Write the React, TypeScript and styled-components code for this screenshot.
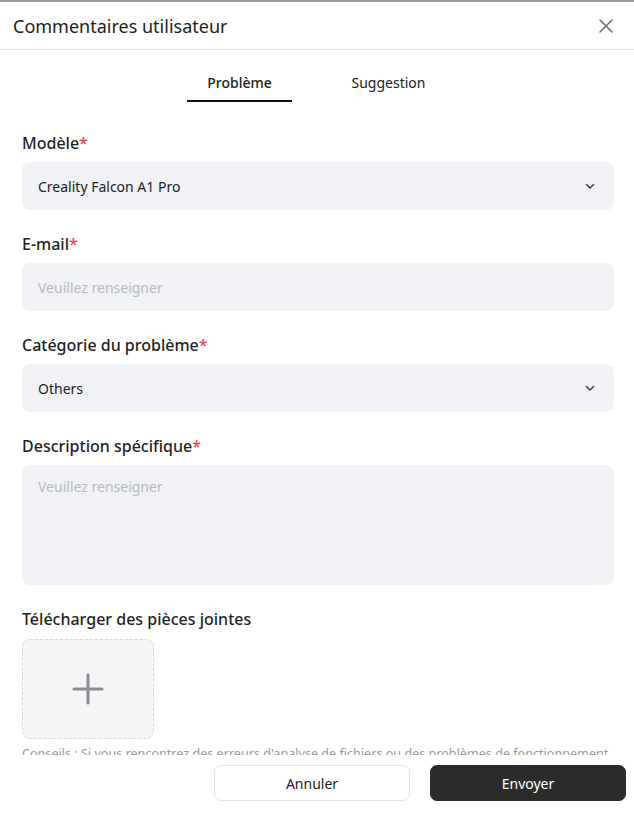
import React, { useState } from "react";
import styled, { createGlobalStyle } from "styled-components";

const GlobalStyle = createGlobalStyle`
  html, body {
    margin: 0;
    padding: 0;
    background: #ffffff;
  }
  body {
    font-family: "Noto Sans", "Liberation Sans", sans-serif;
    color: #1f1f1f;
  }
  * {
    box-sizing: border-box;
  }
`

const Dialog = styled.div`
  width: 634px;
  height: 825px;
  border-top: 2px solid #9b9b9b;
  display: flex;
  flex-direction: column;
  background: #fff;
`

const Header = styled.div`
  height: 48px;
  flex-shrink: 0;
  display: flex;
  align-items: center;
  justify-content: space-between;
  padding: 0 18px 0 13px;
  border-bottom: 1px solid #e4e4e6;
`

const Title = styled.h1`
  margin: 0;
  font-size: 18px;
  font-weight: 400;
  color: #222;
`

const CloseButton = styled.button`
  border: none;
  background: transparent;
  padding: 0;
  width: 20px;
  height: 20px;
  display: flex;
  align-items: center;
  justify-content: center;
  cursor: pointer;
`

const Body = styled.div`
  flex: 1;
  overflow: hidden;
  padding: 0 20px 0 22px;
`

const Tabs = styled.div`
  display: flex;
  justify-content: center;
  margin-top: 20px;
  padding-right: 8px;
`

const Tab = styled.button<{ $active: boolean }>`
  border: none;
  background: transparent;
  font-family: inherit;
  font-size: 14px;
  font-weight: ${p => (p.$active ? 500 : 400)};
  color: #222;
  width: 105px;
  height: 32px;
  padding: 0 0 5px;
  margin: 0 22px;
  border-bottom: 2px solid ${p => (p.$active ? "#111" : "transparent")};
  cursor: pointer;
`

const Field = styled.div<{ $first?: boolean }>`
  margin-top: ${p => (p.$first ? "30px" : "23px")};
`

const Label = styled.div`
  font-size: 16px;
  font-weight: 500;
  line-height: 22px;
  color: #1f1f1f;
  margin-bottom: 8px;
  span {
    color: #e5484d;
  }
`

const Box = styled.div<{ $tall?: boolean }>`
  height: ${p => (p.$tall ? "120px" : "48px")};
  background: #f1f2f5;
  border-radius: 8px;
  display: flex;
  align-items: ${p => (p.$tall ? "flex-start" : "center")};
  justify-content: space-between;
  padding: ${p => (p.$tall ? "12px 16px" : "0 18px 0 16px")};
  font-size: 14px;
  color: #222;
`

const Placeholder = styled.span`
  color: #b8bac0;
`

const Upload = styled.div`
  width: 132px;
  height: 100px;
  margin-top: 9px;
  border: 1px dashed #d6d8dc;
  border-radius: 8px;
  background: #f4f5f7;
  display: flex;
  align-items: center;
  justify-content: center;
`

const Hint = styled.div`
  margin-top: 6px;
  font-size: 12.6px;
  color: #9a9a9a;
  white-space: nowrap;
`

const Footer = styled.div`
  height: 70px;
  flex-shrink: 0;
  display: flex;
  justify-content: flex-end;
  align-items: flex-start;
  gap: 20px;
  padding: 10px 8px 0 0;
`

const Button = styled.button<{ $primary?: boolean }>`
  width: 196px;
  height: 36px;
  border-radius: 7px;
  font-family: inherit;
  font-size: 14px;
  cursor: pointer;
  border: 1px solid ${p => (p.$primary ? "#2b2b2b" : "#e2e3e6")};
  background: ${p => (p.$primary ? "#2b2b2b" : "#fff")};
  color: ${p => (p.$primary ? "#fff" : "#222")};
`

const Chevron = () => (
  <svg width="12" height="12" viewBox="0 0 12 12" fill="none">
    <path d="M2.5 4.5L6 8l3.5-3.5" stroke="#333" strokeWidth="1.4" strokeLinecap="round" strokeLinejoin="round" />
  </svg>
)

const CloseIcon = () => (
  <svg width="16" height="16" viewBox="0 0 16 16" fill="none">
    <path d="M2 2l12 12M14 2L2 14" stroke="#6b6b6b" strokeWidth="1.5" strokeLinecap="round" />
  </svg>
)

const PlusIcon = () => (
  <svg width="32" height="32" viewBox="0 0 32 32" fill="none">
    <path d="M16 2v28M2 16h28" stroke="#8b8c92" strokeWidth="3" strokeLinecap="round" />
  </svg>
)

const App = () => {
  const [tab, setTab] = useState("probleme");

  return (
    <Dialog>
      <GlobalStyle />
      <Header>
        <Title>Commentaires utilisateur</Title>
        <CloseButton>
          <CloseIcon />
        </CloseButton>
      </Header>
      <Body>
        <Tabs>
          <Tab $active={tab === "probleme"} onClick={() => setTab("probleme")}>Problème</Tab>
          <Tab $active={tab === "suggestion"} onClick={() => setTab("suggestion")}>Suggestion</Tab>
        </Tabs>
        <Field $first>
          <Label>Modèle<span>*</span></Label>
          <Box>
            Creality Falcon A1 Pro
            <Chevron />
          </Box>
        </Field>
        <Field>
          <Label>E-mail<span>*</span></Label>
          <Box>
            <Placeholder>Veuillez renseigner</Placeholder>
          </Box>
        </Field>
        <Field>
          <Label>Catégorie du problème<span>*</span></Label>
          <Box>
            Others
            <Chevron />
          </Box>
        </Field>
        <Field>
          <Label>Description spécifique<span>*</span></Label>
          <Box $tall>
            <Placeholder>Veuillez renseigner</Placeholder>
          </Box>
        </Field>
        <Field>
          <Label>Télécharger des pièces jointes</Label>
          <Upload>
            <PlusIcon />
          </Upload>
          <Hint>Conseils : Si vous rencontrez des erreurs d'analyse de fichiers ou des problèmes de fonctionnement</Hint>
        </Field>
      </Body>
      <Footer>
        <Button>Annuler</Button>
        <Button $primary>Envoyer</Button>
      </Footer>
    </Dialog>
  )
}

export default App;
